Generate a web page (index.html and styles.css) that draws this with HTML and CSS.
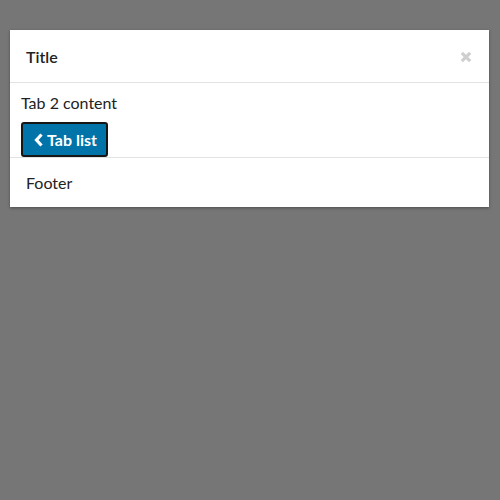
FILE: index.html
```html
<!DOCTYPE html>
<html>
<head>
<meta charset="utf-8">
<link rel="stylesheet" href="styles.css">
</head>
<body>
<div class="dialog">
  <div class="header">
    <span class="title">Title</span>
    <svg class="close" width="12" height="12" viewBox="0 0 12 12"><path d="M1.8 1.8 L10.2 10.2 M10.2 1.8 L1.8 10.2" stroke="#cfcfcf" stroke-width="3.2"/></svg>
  </div>
  <div class="body">
    <div class="text">Tab 2 content</div>
    <button class="btn"><svg width="10" height="14" viewBox="0 0 10 14"><path d="M7.5 1.5 L2.5 7 L7.5 12.5" fill="none" stroke="#fff" stroke-width="3.2" stroke-linejoin="miter"/></svg>Tab list</button>
  </div>
  <div class="footer">Footer</div>
</div>
</body>
</html>
```
FILE: styles.css
```css
html, body { margin: 0; padding: 0; }
body {
  background: #767676;
  width: 500px;
  height: 500px;
  font-family: Lato, "Open Sans", sans-serif;
  font-size: 16px;
  color: #222;
  padding-top: 30px;
  box-sizing: border-box;
}
.dialog {
  margin-left: 10px;
  width: 479px;
  background: #fff;
  box-shadow: 0 1px 3px rgba(0,0,0,0.35);
}
.header {
  height: 52px;
  display: flex;
  align-items: center;
  justify-content: space-between;
  padding: 0 17px 0 16px;
  border-bottom: 1px solid #e2e2e2;
}
.title { font-weight: 600; font-size: 16px; color: #222; }
.close { margin-top: 1px; }
.body {
  padding: 10px 11px 0 11px;
  border-bottom: 1px solid #e2e2e2;
}
.text { line-height: 20px; height: 20px; }
.btn {
  margin-top: 9px;
  display: flex;
  align-items: center;
  gap: 3px;
  height: 35px;
  padding: 0 9px 0 11px;
  background: #0073a8;
  color: #fff;
  border: 2px solid #161616;
  border-radius: 3px;
  font-family: Lato, "Open Sans", sans-serif;
  font-size: 16px;
  font-weight: 700;
}
.footer {
  height: 49px;
  display: flex;
  align-items: center;
  padding-left: 16px;
}
```
